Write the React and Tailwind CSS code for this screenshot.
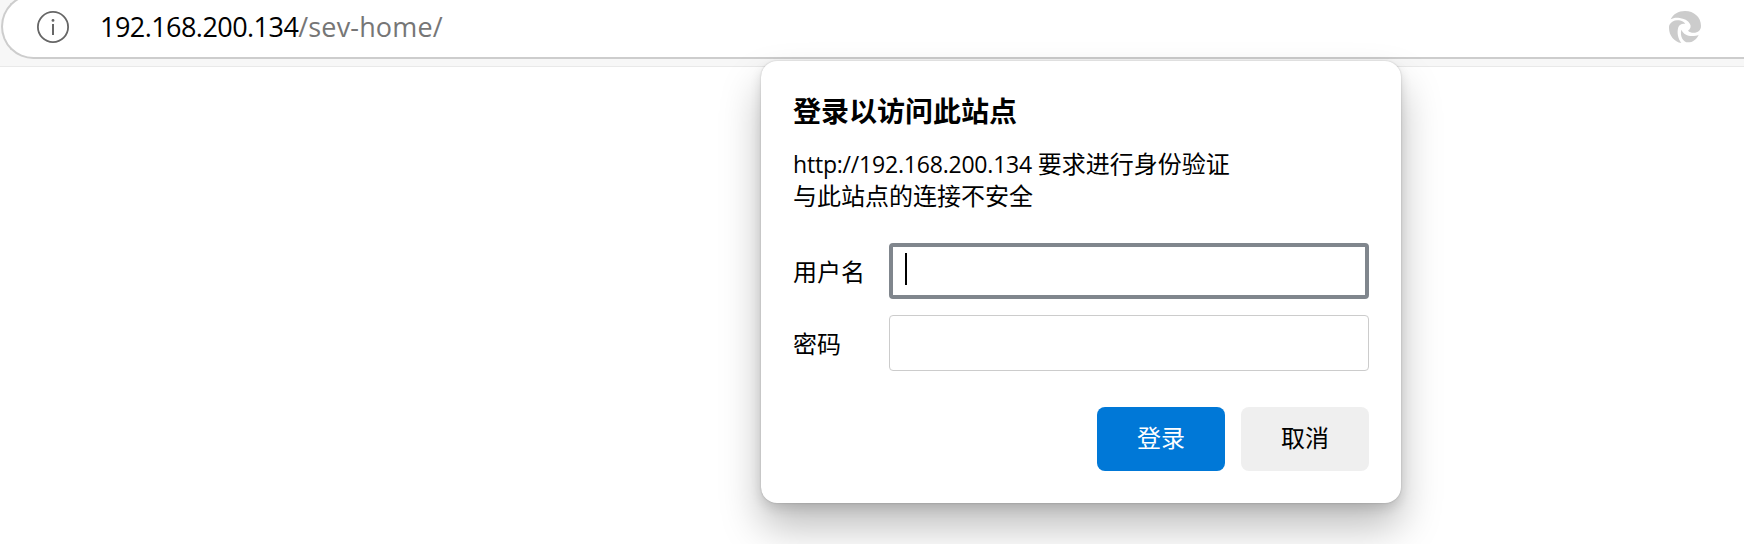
function InfoIcon() {
  return (
    <svg className="h-8 w-8" viewBox="0 0 32 32" fill="none">
      <circle cx="16" cy="16" r="15.1" stroke="#666" strokeWidth="1.8" />
      <rect x="15" y="13" width="2" height="11" fill="#666" />
      <circle cx="16" cy="9.4" r="1.4" fill="#666" />
    </svg>
  );
}

function SwirlIcon() {
  return (
    <svg className="h-8 w-8" viewBox="87 32 96 96" fill="#ccc">
      <path d="M92 57C100 41 115 32 135 32C162 32 183 51 183 76C183 90 174 97 161 97C154 97 148 95 144 91C152 86 154 78 150 71C144 60 132 55 119 53C108 51 99 53 92 57Z" />
      <path d="M88 74C94 63 105 58 117 60C126 61 132 65 136 71C126 69 118 73 115 81C110 98 114 115 124 128C103 125 87 106 87 83C87 80 87 77 88 74Z" />
      <path d="M124 88C130 101 142 107 156 107C164 107 171 106 176 103C170 117 158 126 144 126C129 126 119 107 124 88Z" />
    </svg>
  );
}

function AddressBar() {
  return (
    <header className="h-[67px] border-b border-[#e9e9e9] bg-[#f7f7f7]">
      <div className="h-[59px] overflow-hidden pl-px">
        <div className="-mt-1.5 flex h-[65px] items-center rounded-l-full border-2 border-r-0 border-[#cdcdcd] bg-white pr-[43px] pl-[34px]">
          <InfoIcon />
          <div className="ml-[31px] flex-1 text-[27px] leading-9 whitespace-nowrap text-black">
            <span className="tracking-[-0.55px]">192.168.200.134</span>
            <span className="tracking-[0.15px] text-[#767676]">/sev-home/</span>
          </div>
          <SwirlIcon />
        </div>
      </div>
    </header>
  );
}

function LoginDialog() {
  return (
    <section
      role="dialog"
      className="absolute top-[61px] left-[761px] flex h-[442px] w-[640px] flex-col rounded-2xl bg-white px-8 pt-[30px] pb-8 text-2xl leading-8 text-black shadow-[0_0_2px_rgba(0,0,0,0.2),0_5px_12px_rgba(0,0,0,0.12),0_24px_40px_rgba(0,0,0,0.26)]"
    >
      <h1 className="text-[28px] leading-10 font-bold">登录以访问此站点</h1>
      <p className="mt-[17px] whitespace-nowrap">
        <span className="text-[23px] tracking-[-0.2px]">http://192.168.200.134 </span>
        要求进行身份验证
      </p>
      <p>与此站点的连接不安全</p>
      <div className="mt-[31px] flex items-center">
        <span className="w-24 pt-0.5">用户名</span>
        <div className="flex h-14 flex-1 rounded-[4px] border-4 border-[#80868d] pt-1.5 pl-3">
          <span className="h-8 w-0.5 bg-black" />
        </div>
      </div>
      <div className="mt-4 flex items-center">
        <span className="w-24 pt-0.5">密码</span>
        <div className="h-14 flex-1 rounded-[4px] border border-[#cccccc]" />
      </div>
      <div className="mt-9 flex justify-end gap-4">
        <button className="h-16 w-32 rounded-lg bg-[#0078d7] pb-0.5 text-white">登录</button>
        <button className="h-16 w-32 rounded-lg bg-[#efefef] pb-0.5">取消</button>
      </div>
    </section>
  );
}

export default function App() {
  return (
    <main className="relative h-[544px] w-[1744px] overflow-hidden bg-white font-['Open_Sans','Noto_Sans_CJK_SC',sans-serif]">
      <AddressBar />
      <LoginDialog />
    </main>
  );
}
